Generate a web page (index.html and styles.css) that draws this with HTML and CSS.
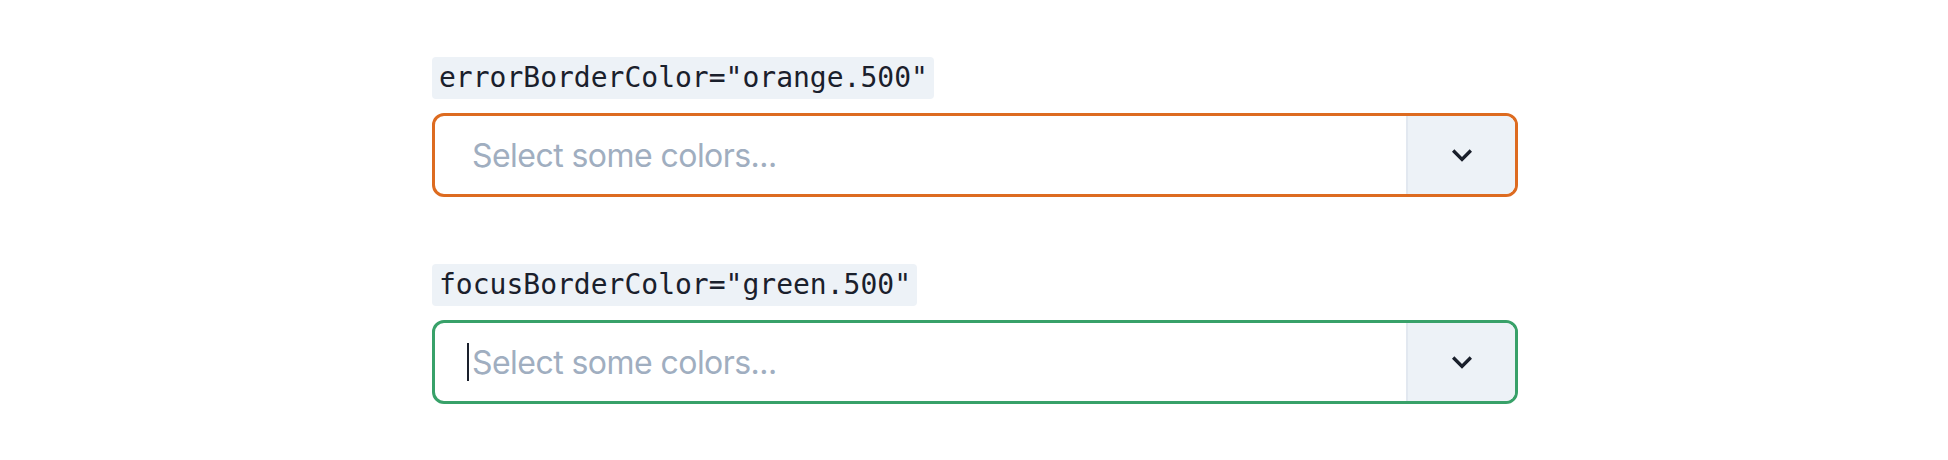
FILE: index.html
```html
<!DOCTYPE html>
<html>
<head>
<meta charset="utf-8">
<link rel="stylesheet" href="styles.css">
</head>
<body>
<main class="stack">
  <section class="field">
    <p class="label"><code class="code">errorBorderColor="orange.500"</code></p>
    <div class="select select-error">
      <div class="value">
        <span class="placeholder">Select some colors...</span>
      </div>
      <div class="indicator">
        <svg class="chevron" viewBox="0 0 24 24" aria-hidden="true"><path fill="currentColor" d="M16.59 8.59L12 13.17 7.41 8.59 6 10l6 6 6-6z"/></svg>
      </div>
    </div>
  </section>
  <section class="field">
    <p class="label"><code class="code">focusBorderColor="green.500"</code></p>
    <div class="select select-focus">
      <div class="value">
        <span class="caret"></span><span class="placeholder">Select some colors...</span>
      </div>
      <div class="indicator">
        <svg class="chevron" viewBox="0 0 24 24" aria-hidden="true"><path fill="currentColor" d="M16.59 8.59L12 13.17 7.41 8.59 6 10l6 6 6-6z"/></svg>
      </div>
    </div>
  </section>
</main>
</body>
</html>
```
FILE: styles.css
```css
html, body {
  margin: 0;
  padding: 0;
  background: #ffffff;
}
body {
  font-family: Inter, "Liberation Sans", sans-serif;
  color: #1a202c;
}
.stack {
  width: 1086px;
  margin-left: 432px;
  padding-top: 57px;
  display: flex;
  flex-direction: column;
  gap: 67px;
}
.field {
  display: flex;
  flex-direction: column;
  gap: 14px;
}
.label {
  margin: 0;
  line-height: 42px;
  height: 42px;
}
.code {
  font-family: "DejaVu Sans Mono", "Liberation Mono", monospace;
  font-size: 28px;
  line-height: 42px;
  background: #edf2f7;
  color: #1a202c;
  padding: 0 6px 0 7px;
  border-radius: 4px;
  display: inline-block;
}
.select {
  box-sizing: border-box;
  height: 84px;
  border: 3px solid #e2e8f0;
  border-radius: 12px;
  display: flex;
  overflow: hidden;
  background: #fff;
}
.select-error { border-color: #dd6b20; }
.select-focus { border-color: #38a169; }
.value {
  flex: 1;
  display: flex;
  align-items: center;
  padding-left: 37px;
}
.placeholder {
  font-size: 32px;
  letter-spacing: -0.55px;
  color: #a0aec0;
}
.caret {
  width: 2px;
  height: 38px;
  background: #1a202c;
  margin-left: -5px;
  margin-right: 3px;
}
.indicator {
  width: 107px;
  background: #edf2f7;
  border-left: 2px solid #e2e8f0;
  display: flex;
  align-items: center;
  justify-content: center;
}
.chevron {
  width: 40px;
  height: 40px;
  color: #1a202c;
}
```
